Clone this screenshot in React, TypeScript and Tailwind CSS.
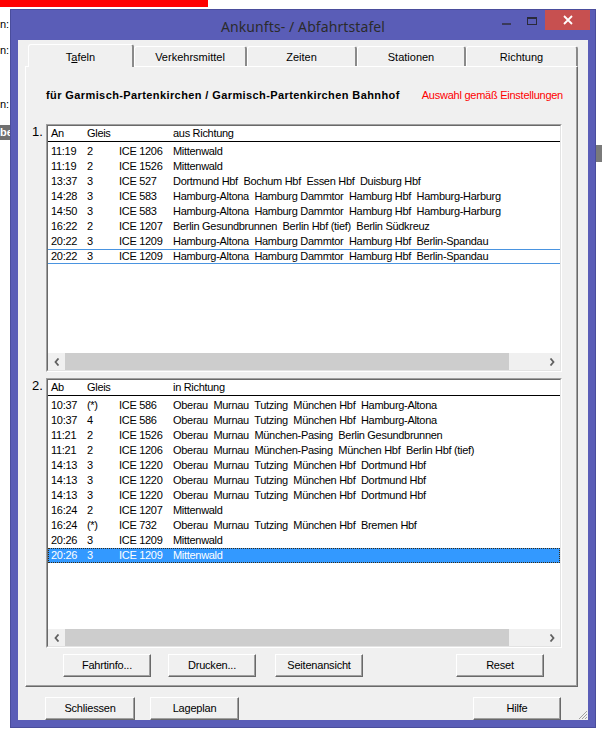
import React from "react";

type Row = [string, string, string, string];

const list1: Row[] = [
  ["11:19", "2", "ICE 1206", "Mittenwald"],
  ["11:19", "2", "ICE 1526", "Mittenwald"],
  ["13:37", "3", "ICE 527", "Dortmund Hbf  Bochum Hbf  Essen Hbf  Duisburg Hbf"],
  ["14:28", "3", "ICE 583", "Hamburg-Altona  Hamburg Dammtor  Hamburg Hbf  Hamburg-Harburg"],
  ["14:50", "3", "ICE 583", "Hamburg-Altona  Hamburg Dammtor  Hamburg Hbf  Hamburg-Harburg"],
  ["16:22", "2", "ICE 1207", "Berlin Gesundbrunnen  Berlin Hbf (tief)  Berlin Südkreuz"],
  ["20:22", "3", "ICE 1209", "Hamburg-Altona  Hamburg Dammtor  Hamburg Hbf  Berlin-Spandau"],
  ["20:22", "3", "ICE 1209", "Hamburg-Altona  Hamburg Dammtor  Hamburg Hbf  Berlin-Spandau"],
];

const list2: Row[] = [
  ["10:37", "(*)", "ICE 586", "Oberau  Murnau  Tutzing  München Hbf  Hamburg-Altona"],
  ["10:37", "4", "ICE 586", "Oberau  Murnau  Tutzing  München Hbf  Hamburg-Altona"],
  ["11:21", "2", "ICE 1526", "Oberau  Murnau  München-Pasing  Berlin Gesundbrunnen"],
  ["11:21", "2", "ICE 1206", "Oberau  Murnau  München-Pasing  München Hbf  Berlin Hbf (tief)"],
  ["14:13", "3", "ICE 1220", "Oberau  Murnau  Tutzing  München Hbf  Dortmund Hbf"],
  ["14:13", "3", "ICE 1220", "Oberau  Murnau  Tutzing  München Hbf  Dortmund Hbf"],
  ["14:13", "3", "ICE 1220", "Oberau  Murnau  Tutzing  München Hbf  Dortmund Hbf"],
  ["16:24", "2", "ICE 1207", "Mittenwald"],
  ["16:24", "(*)", "ICE 732", "Oberau  Murnau  Tutzing  München Hbf  Bremen Hbf"],
  ["20:26", "3", "ICE 1209", "Mittenwald"],
  ["20:26", "3", "ICE 1209", "Mittenwald"],
];

function ListRow({ r, mode }: { r: Row; mode: "none" | "focus" | "sel" }) {
  const cls =
    mode === "sel"
      ? "flex h-[15px] items-center whitespace-pre pl-[3px] bg-[#3399ff] text-white outline outline-1 outline-dotted outline-[#3a2a10] -outline-offset-1"
      : mode === "focus"
      ? "flex h-[15px] items-center whitespace-pre pl-[3px] text-black shadow-[inset_0_1px_0_#4a94e0,inset_0_-1px_0_#4a94e0]"
      : "flex h-[15px] items-center whitespace-pre pl-[3px] text-black";
  return (
    <div className={cls}>
      <span className="w-[36px] shrink-0">{r[0]}</span>
      <span className="w-[32px] shrink-0">{r[1]}</span>
      <span className="w-[54px] shrink-0">{r[2]}</span>
      <span>{r[3]}</span>
    </div>
  );
}

function Chevron({ dir }: { dir: "l" | "r" }) {
  return (
    <svg width="6" height="8" viewBox="0 0 6 8">
      {dir === "l" ? (
        <path d="M4.5 0.5 L1.5 4 L4.5 7.5" fill="none" stroke="#606060" strokeWidth="1.8" />
      ) : (
        <path d="M1.5 0.5 L4.5 4 L1.5 7.5" fill="none" stroke="#606060" strokeWidth="1.8" />
      )}
    </svg>
  );
}

function HScroll() {
  return (
    <div className="flex h-[17px] shrink-0 bg-[#f0f0f0]">
      <div className="flex w-[17px] items-center justify-center">
        <Chevron dir="l" />
      </div>
      <div className="flex flex-1">
        <div className="h-full w-[444px] bg-[#cdcdcd]" />
      </div>
      <div className="flex w-[17px] items-center justify-center">
        <Chevron dir="r" />
      </div>
    </div>
  );
}

function ListBox({
  rows,
  head,
  height,
  last,
}: {
  rows: Row[];
  head: [string, string];
  height: string;
  last: "focus" | "sel";
}) {
  return (
    <div className={`flex w-[516px] flex-col border border-t-[#a0a0a0] border-l-[#a0a0a0] border-r-white border-b-white ${height}`}>
      <div className="flex flex-1 flex-col border border-t-[#696969] border-l-[#696969] border-r-[#e3e3e3] border-b-[#e3e3e3] bg-white tracking-[-0.3px]">
        <div className="flex h-[15px] shrink-0 items-center whitespace-pre pl-[3px] text-black">
          <span className="w-[36px] shrink-0">{head[0]}</span>
          <span className="w-[86px] shrink-0">Gleis</span>
          <span>{head[1]}</span>
        </div>
        <div className="h-px shrink-0 bg-black" />
        <div className="flex flex-1 flex-col pt-[2px]">
          {rows.map((r, i) => (
            <ListRow key={i} r={r} mode={i === rows.length - 1 ? last : "none"} />
          ))}
        </div>
        <HScroll />
      </div>
    </div>
  );
}

function Btn({ label, w }: { label: string; w: string }) {
  return (
    <div className={`flex h-[23px] items-center justify-center border border-t-white border-l-white border-r-[#696969] border-b-[#696969] bg-[#f0f0f0] tracking-[-0.2px] text-black shadow-[inset_-1px_-1px_0_#a0a0a0] ${w}`}>
      {label}
    </div>
  );
}

function Tab({ label, w, sel }: { label: React.ReactNode; w: string; sel?: boolean }) {
  return sel ? (
    <div className={`relative z-10 -mb-px flex h-[23px] items-start justify-center rounded-tl-[3px] rounded-tr-[3px] border-l border-t border-r-2 border-l-white border-t-white border-r-[#8a8a8a] bg-[#f0f0f0] pt-[6px] text-black ${w}`}>
      {label}
    </div>
  ) : (
    <div className={`flex h-[20px] items-start justify-center rounded-tl-[3px] rounded-tr-[3px] border-l border-t border-r-2 border-l-white border-t-white border-r-[#8a8a8a] bg-[#f0f0f0] pt-[4px] text-black ${w}`}>
      {label}
    </div>
  );
}

export default function App() {
  return (
    <div className="relative h-[738px] w-[602px] overflow-hidden bg-white font-['Liberation_Sans',Arial,sans-serif] text-[11px] leading-[13px]">
      {/* background windows */}
      <div className="absolute left-0 top-0 h-[7px] w-[208px] bg-[#ff0000]" />
      <div className="absolute left-0 top-[18px] text-[11px] text-black">n:</div>
      <div className="absolute left-0 top-[44px] text-[11px] text-black">n:</div>
      <div className="absolute left-0 top-[98px] text-[11px] text-black">n:</div>
      <div className="absolute left-0 top-[125px] flex h-[15px] w-[12px] items-center bg-[#707070] pl-0 text-[11px] font-bold text-white">
        be
      </div>
      <div className="absolute left-[596px] top-[145px] h-[17px] w-[6px] bg-[#7a7a7a]" />

      {/* main window */}
      <div className="absolute left-[10px] top-[9px] flex h-[719px] w-[586px] flex-col border border-[#4a4d9c] bg-[#5a5db7]">
        {/* title bar */}
        <div className="grid h-[30px] shrink-0 grid-cols-[1fr_auto_1fr]">
          <div />
          <div className="flex items-center pt-[2px] font-['Noto_Sans',sans-serif] text-[14px] tracking-[0.1px] text-[#2b2b2b]">
            Ankunfts- / Abfahrtstafel
          </div>
          <div className="flex items-start justify-end pr-[5px]">
            <div className="flex h-[20px] w-[26px] items-end justify-center pb-[5px]">
              <div className="h-[2px] w-[9px] bg-[#3a3a5a]" />
            </div>
            <div className="flex h-[20px] w-[26px] items-start justify-center pt-[7px]">
              <div className="h-[8px] w-[10px] border border-t-2 border-[#2a2a3a]" />
            </div>
            <div className="flex h-[20px] w-[45px] items-center justify-center bg-[#c75050]">
              <svg width="10" height="10" viewBox="0 0 10 10">
                <path d="M1 1 L9 9 M9 1 L1 9" stroke="white" strokeWidth="1.8" />
              </svg>
            </div>
          </div>
        </div>

        {/* client area */}
        <div className="mx-[7px] flex h-[680px] flex-col bg-[#f0f0f0]">
          {/* tabs */}
          <div className="mt-[4px] flex h-[22px] items-end pl-[10px]">
            <Tab
              sel
              w="w-[106px]"
              label={
                <span>
                  T<span className="underline">a</span>feln
                </span>
              }
            />
            <Tab w="w-[113px]" label="Verkehrsmittel" />
            <Tab w="w-[110px]" label="Zeiten" />
            <Tab w="w-[109px]" label="Stationen" />
            <Tab w="w-[112px]" label="Richtung" />
          </div>

          {/* panel */}
          <div className="ml-[7px] flex h-[621px] w-[553px] flex-col border border-t-white border-l-white border-r-[#696969] border-b-[#696969] shadow-[inset_-1px_-1px_0_#a0a0a0]">
            <div className="mt-[21px] flex h-[14px] items-center justify-between pl-[20px] pr-[14px]">
              <span className="font-bold tracking-[0.4px] text-black">
                für Garmisch-Partenkirchen / Garmisch-Partenkirchen Bahnhof
              </span>
              <span className="tracking-[-0.25px] text-[#ff0000]">Auswahl gemäß Einstellungen</span>
            </div>

            <div className="mt-[22px] flex pl-[6px]">
              <div className="w-[14px] pt-[1px] text-[13px] leading-[14px] text-black">1.</div>
              <ListBox rows={list1} head={["An", "aus Richtung"]} height="h-[248px]" last="focus" />
            </div>

            <div className="h-[6px]" />

            <div className="flex pl-[6px]">
              <div className="w-[14px] pt-[1px] text-[13px] leading-[14px] text-black">2.</div>
              <ListBox rows={list2} head={["Ab", "in Richtung"]} height="h-[270px]" last="sel" />
            </div>

            <div className="mt-[6px] flex pl-[37px]">
              <Btn label="Fahrtinfo..." w="w-[88px]" />
              <div className="w-[17px]" />
              <Btn label="Drucken..." w="w-[88px]" />
              <div className="w-[19px]" />
              <Btn label="Seitenansicht" w="w-[88px]" />
              <div className="w-[93px]" />
              <Btn label="Reset" w="w-[88px]" />
            </div>
          </div>

          {/* bottom buttons */}
          <div className="mt-[6px] flex items-end pl-[27px]">
            <Btn label="Schliessen" w="w-[90px]" />
            <div className="w-[15px]" />
            <Btn label="Lageplan" w="w-[89px]" />
            <div className="w-[234px]" />
            <Btn label="Hilfe" w="w-[88px]" />
            <div className="flex h-[27px] flex-1 items-end justify-end">
              <svg width="11" height="11" viewBox="0 0 11 11">
                <path d="M10 2 L2 10 M10 5 L5 10 M10 8 L8 10" stroke="#a0a0a0" strokeWidth="1" />
              </svg>
            </div>
          </div>
        </div>
      </div>
    </div>
  );
}
